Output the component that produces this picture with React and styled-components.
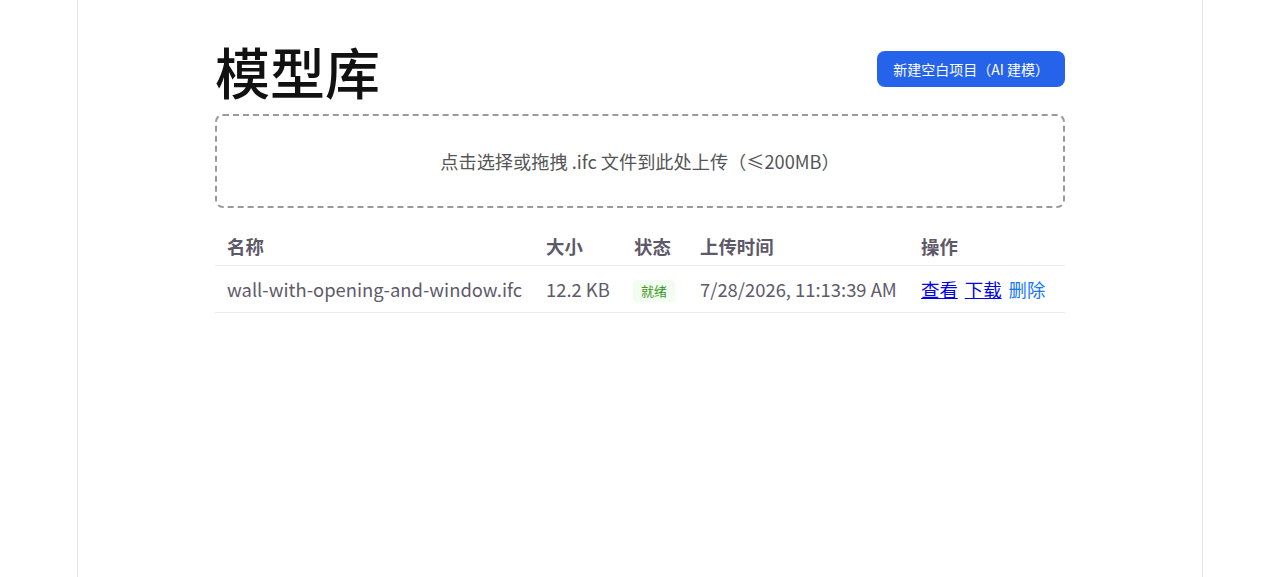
import React from 'react';
import styled, { createGlobalStyle } from 'styled-components';

const GlobalStyle = createGlobalStyle`
  html, body {
    margin: 0;
    padding: 0;
    background: #ffffff;
  }
  body {
    font-family: "Noto Sans CJK SC", "Noto Sans", sans-serif;
  }
`;

const Page = styled.div`
  width: 1126px;
  min-height: 577px;
  margin: 0 auto;
  box-sizing: border-box;
  border-left: 1px solid #e5e5e5;
  border-right: 1px solid #e5e5e5;
`;

const Content = styled.div`
  width: 850px;
  margin: 0 auto;
  padding-top: 30px;
`;

const Header = styled.div`
  display: flex;
  align-items: center;
  justify-content: space-between;
`;

const Title = styled.h1`
  margin: 0;
  font-size: 55px;
  line-height: 80px;
  font-weight: 500;
  color: #111;
`;

const PrimaryButton = styled.button`
  height: 36px;
  padding: 0 16px;
  margin-top: -2px;
  border: none;
  border-radius: 8px;
  background: #2563eb;
  color: #ffffff;
  font-family: "Noto Sans CJK SC", sans-serif;
  font-size: 14px;
  cursor: pointer;
`;

const Dropzone = styled.div`
  margin-top: 4px;
  height: 94px;
  box-sizing: border-box;
  border: 2px dashed #9a9a9a;
  border-radius: 8px;
  display: flex;
  align-items: center;
  justify-content: center;
  color: #555;
  font-size: 18.2px;
`;

const Table = styled.table`
  width: 100%;
  margin-top: 18px;
  border-collapse: collapse;
  table-layout: fixed;
`;

const Th = styled.th`
  text-align: left;
  padding: 7px 12px 6px;
  font-size: 18.4px;
  font-weight: 700;
  color: #5e5969;
  border-bottom: 1px solid #ececec;
`;

const Td = styled.td`
  padding: 9px 12px 10px;
  font-size: 18.4px;
  color: #5f5a6a;
  border-bottom: 1px solid #ececec;
  white-space: nowrap;
`;

const Badge = styled.span`
  display: inline-block;
  padding: 0 8px;
  line-height: 22px;
  font-size: 13px;
  border-radius: 4px;
  background: #f3fcf0;
  color: #3d9a1f;
  margin-left: -1px;
`;

const Actions = styled.div`
  display: flex;
  gap: 7px;
`;

const Link = styled.a`
  color: #0000ee;
  text-decoration: underline;
  cursor: pointer;
`;

const DangerLink = styled.button`
  padding: 0;
  border: none;
  background: none;
  font: inherit;
  color: #1677ff;
  cursor: pointer;
`;

const columns = ['名称', '大小', '状态', '上传时间', '操作'];
const widths = [319, 88, 66, 221, 156];

const models = [
  {
    name: 'wall-with-opening-and-window.ifc',
    size: '12.2 KB',
    status: '就绪',
    uploaded: '7/28/2026, 11:13:39 AM',
  },
];

export default function App() {
  return (
    <>
      <GlobalStyle />
      <Page>
        <Content>
          <Header>
            <Title>模型库</Title>
            <PrimaryButton>新建空白项目（AI 建模）</PrimaryButton>
          </Header>
          <Dropzone>点击选择或拖拽 .ifc 文件到此处上传（≤200MB）</Dropzone>
          <Table>
            <colgroup>
              {widths.map((w, i) => (
                <col key={i} style={{ width: w }} />
              ))}
            </colgroup>
            <thead>
              <tr>
                {columns.map((c) => (
                  <Th key={c}>{c}</Th>
                ))}
              </tr>
            </thead>
            <tbody>
              {models.map((m) => (
                <tr key={m.name}>
                  <Td>{m.name}</Td>
                  <Td>{m.size}</Td>
                  <Td>
                    <Badge>{m.status}</Badge>
                  </Td>
                  <Td>{m.uploaded}</Td>
                  <Td>
                    <Actions>
                      <Link href="#">查看</Link>
                      <Link href="#">下载</Link>
                      <DangerLink>删除</DangerLink>
                    </Actions>
                  </Td>
                </tr>
              ))}
            </tbody>
          </Table>
        </Content>
      </Page>
    </>
  );
}
